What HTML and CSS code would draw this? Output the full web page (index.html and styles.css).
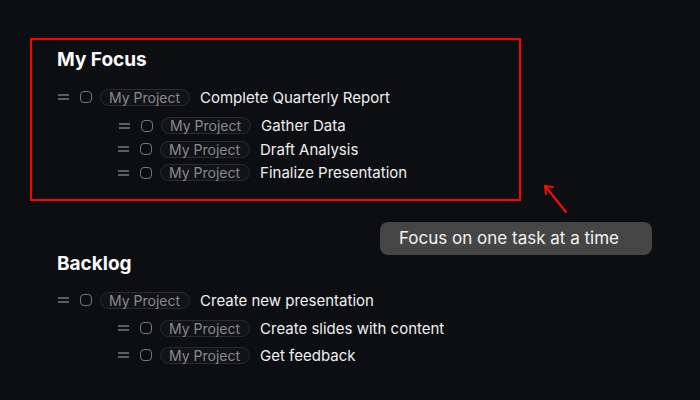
FILE: index.html
```html
<!DOCTYPE html>
<html lang="en">
<head>
  <meta charset="UTF-8">
  <title>My Focus</title>
  <link rel="stylesheet" href="styles.css">
</head>
<body>
  <div class="page">
    <!-- Focus section -->
    <section class="focus-box">
      <h2 class="section-title">My Focus</h2>
      <div class="task">
        <svg class="handle" width="11" height="6" viewBox="0 0 11 6"><path d="M0 1h11M0 5h11" stroke="#7a7a7a" stroke-width="1.4"/></svg>
        <span class="check"></span>
        <span class="pill">My Project</span>
        <span class="task-name">Complete Quarterly Report</span>
      </div>
      <div class="subtasks">
        <div class="task sub">
          <svg class="handle" width="11" height="6" viewBox="0 0 11 6"><path d="M0 1h11M0 5h11" stroke="#7a7a7a" stroke-width="1.4"/></svg>
          <span class="check"></span>
          <span class="pill">My Project</span>
          <span class="task-name">Gather Data</span>
        </div>
        <div class="task sub">
          <svg class="handle" width="11" height="6" viewBox="0 0 11 6"><path d="M0 1h11M0 5h11" stroke="#7a7a7a" stroke-width="1.4"/></svg>
          <span class="check"></span>
          <span class="pill">My Project</span>
          <span class="task-name">Draft Analysis</span>
        </div>
        <div class="task sub">
          <svg class="handle" width="11" height="6" viewBox="0 0 11 6"><path d="M0 1h11M0 5h11" stroke="#7a7a7a" stroke-width="1.4"/></svg>
          <span class="check"></span>
          <span class="pill">My Project</span>
          <span class="task-name">Finalize Presentation</span>
        </div>
      </div>
    </section>

    <!-- Backlog section -->
    <section class="backlog">
      <h2 class="section-title">Backlog</h2>
      <div class="task">
        <svg class="handle" width="11" height="6" viewBox="0 0 11 6"><path d="M0 1h11M0 5h11" stroke="#7a7a7a" stroke-width="1.4"/></svg>
        <span class="check"></span>
        <span class="pill">My Project</span>
        <span class="task-name">Create new presentation</span>
      </div>
      <div class="subtasks loose">
        <div class="task sub">
          <svg class="handle" width="11" height="6" viewBox="0 0 11 6"><path d="M0 1h11M0 5h11" stroke="#7a7a7a" stroke-width="1.4"/></svg>
          <span class="check"></span>
          <span class="pill">My Project</span>
          <span class="task-name">Create slides with content</span>
        </div>
        <div class="task sub">
          <svg class="handle" width="11" height="6" viewBox="0 0 11 6"><path d="M0 1h11M0 5h11" stroke="#7a7a7a" stroke-width="1.4"/></svg>
          <span class="check"></span>
          <span class="pill">My Project</span>
          <span class="task-name">Get feedback</span>
        </div>
      </div>
    </section>

    <!-- Annotation -->
    <svg class="arrow" width="30" height="34" viewBox="0 0 30 34">
      <path d="M27 31L6 5M6 5l1 8M6 5l8 1" stroke="#ff0a0a" stroke-width="2" fill="none" stroke-linecap="round"/>
    </svg>
    <div class="tooltip">Focus on one task at a time</div>
  </div>
</body>
</html>
```

FILE: styles.css
```css
* { box-sizing: border-box; }

body {
  margin: 0;
  background: #0d0e11;
  font-family: Inter, "Noto Sans", sans-serif;
  color: #f0f0f0;
  width: 700px;
  height: 400px;
  overflow: hidden;
}

.page {
  position: relative;
  padding: 38px 0 0 30px;
  height: 400px;
}

/* Sections */
.focus-box {
  width: 491px;
  height: 163px;
  border: 2px solid #ff0000;
  padding: 8px 0 0 25px;
}

.section-title {
  margin: 0;
  font-size: 19px;
  font-weight: 700;
  line-height: 24px;
  color: #fafafa;
}

.backlog {
  margin-top: 51px;
  padding-left: 27px;
}

/* Task rows */
.task {
  display: flex;
  align-items: center;
  height: 22px;
  margin-top: 14px;
}

.focus-box .task:first-of-type { margin-left: 1px; }
.backlog > .task { margin-top: 13px; margin-left: 1px; }

.subtasks { margin-top: 6px; padding-left: 61px; }
.subtasks .task { margin-top: 0; height: 23.5px; }
.subtasks.loose .task { height: 22px; margin-bottom: 5px; }

.handle { flex: none; }

.check {
  width: 12px;
  height: 12px;
  margin-left: 11px;
  border: 1.4px solid #767676;
  border-radius: 4px;
  flex: none;
}

.pill {
  margin-left: 8px;
  height: 17px;
  padding: 0 9px 0 8px;
  border: 1px solid #2a2b2e;
  border-radius: 9px;
  background: #121316;
  font-size: 14px;
  line-height: 15px;
  color: #8a8a8a;
  white-space: nowrap;
}

.task-name {
  margin-left: 10px;
  font-size: 15px;
  color: #f0f0f0;
  white-space: nowrap;
}

/* Annotation */
.arrow {
  position: absolute;
  left: 539px;
  top: 181px;
}

.tooltip {
  position: absolute;
  left: 380px;
  top: 222px;
  width: 272px;
  height: 33px;
  padding-left: 19px;
  border-radius: 8px;
  background: #454545;
  font-size: 17px;
  line-height: 33px;
  color: #f2f2f2;
}
```
